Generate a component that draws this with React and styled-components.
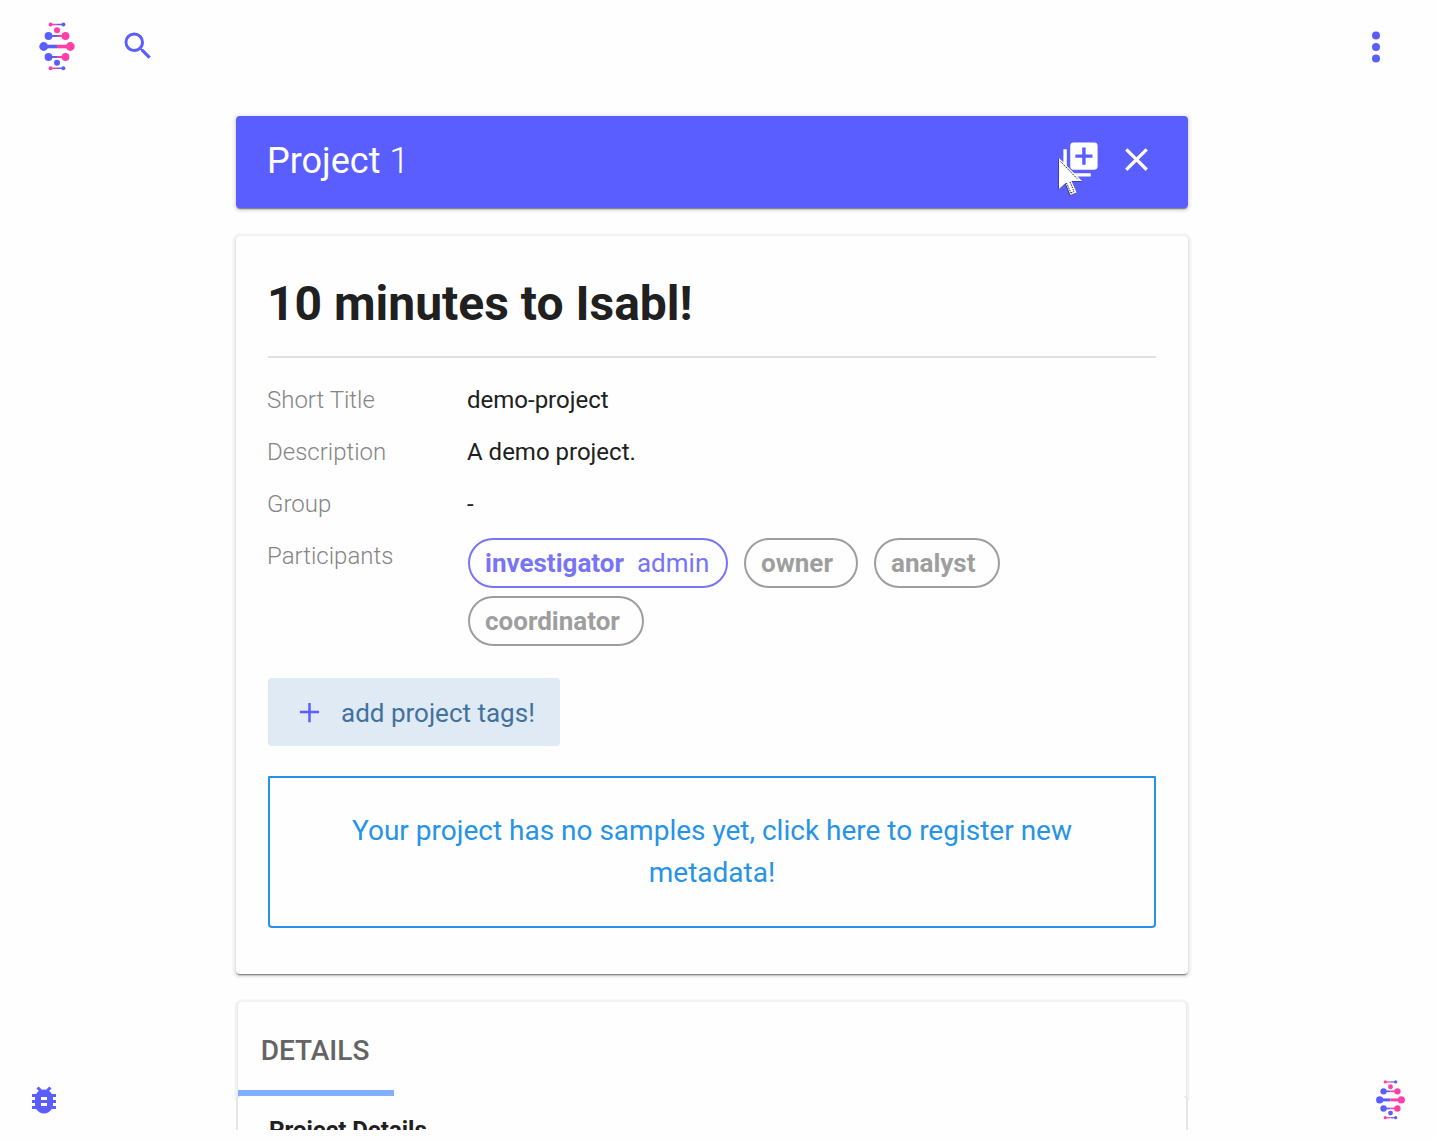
import React from "react";
import styled, { createGlobalStyle } from "styled-components";

const GlobalStyle = createGlobalStyle`
  *, *::before, *::after { box-sizing: border-box; }
  body { margin: 0; background: #fefefe; font-family: Roboto, "Liberation Sans", sans-serif; color: #202020; }
  h1, h2, p, dl, dd, dt { margin: 0; }
  button { font: inherit; border: 0; padding: 0; background: none; cursor: pointer; }
`;

const Page = styled.div`
  position: relative;
  width: 1436px;
  height: 1130px;
  overflow: hidden;
`;
const TopBar = styled.header`
  display: flex;
  align-items: center;
  height: 92px;
  padding: 0 40px 0 38px;
`;
const IconButton = styled.button`
  display: flex;
  color: ${(p) => p.$color || "#5b5eff"};
`;
const SearchButton = styled(IconButton)`
  margin-left: 44px;
`;
const MenuButton = styled(IconButton)`
  margin-left: auto;
`;
const Main = styled.main`
  display: flex;
  flex-direction: column;
  width: 952px;
  margin: 24px 0 0 236px;
`;
const Card = styled.section`
  border-radius: 4px;
  background: #fefefe;
  box-shadow: 0 2px 2px -1px rgba(0, 0, 0, 0.5), 0 1px 2px rgba(0, 0, 0, 0.16), 0 1px 0 3.5px #f3f3f3;
`;
const TitleBar = styled(Card)`
  display: flex;
  align-items: center;
  height: 92px;
  padding: 0 32px 0 31px;
  background: #5b5eff;
  color: #fff;
`;
const BarTitle = styled.h2`
  flex: 1;
  font-size: 36px;
  line-height: 44px;
  font-weight: 400;
  padding-bottom: 3px;
`;
const Thin = styled.span`
  font-weight: 300;
`;
const BarActions = styled.div`
  display: flex;
  align-items: center;
  gap: 16px;
  padding-bottom: 5px;
`;
const Summary = styled(Card)`
  margin-top: 28px;
  height: 738px;
  padding: 32px;
`;
const Heading = styled.h1`
  height: 90px;
  border-bottom: 2px solid #e0e0e0;
  font-size: 48px;
  line-height: 72px;
  font-weight: 700;
  text-indent: -1px;
`;
const Fields = styled.dl`
  display: grid;
  grid-template-columns: 200px 1fr;
  grid-auto-rows: minmax(52px, auto);
  margin-top: 16px;
  font-size: 24px;
  line-height: 52px;
`;
const Label = styled.dt`
  color: #858585;
  font-weight: 300;
  text-indent: -1px;
`;
const Value = styled.dd`
  color: #202020;
  text-indent: -1px;
`;
const Chips = styled.dd`
  display: flex;
  flex-wrap: wrap;
  gap: 8px 16px;
  width: 560px;
  padding-top: 8px;
`;
const Chip = styled.span`
  display: flex;
  gap: 13px;
  width: ${(p) => p.$width}px;
  height: 50px;
  padding-left: 15px;
  border: 2px solid currentColor;
  border-radius: 25px;
  color: ${(p) => (p.$active ? "#7774f8" : "#9e9e9e")};
  font-size: 26px;
  line-height: 47px;
  white-space: nowrap;
`;
const TagButton = styled.button`
  display: flex;
  align-items: center;
  width: 292px;
  height: 68px;
  margin-top: 32px;
  padding: 0 0 0 25px;
  border-radius: 4px;
  background: #e0eaf5;
  color: #42729c;
  font-size: 26px;
  white-space: nowrap;
  svg { margin-right: 15px; color: #5b5eff; flex: none; }
`;
const TagText = styled.span`
  padding-top: 2px;
`;
const Notice = styled.button`
  display: block;
  width: 888px;
  height: 152px;
  margin-top: 30px;
  padding: 0 60px;
  border: 2px solid #2693e8;
  border-radius: 1px 1px 4px 4px;
  color: #2693e8;
  font-size: 28px;
  line-height: 42px;
  text-align: center;
`;
const Details = styled.section`
  width: 948px;
  margin: 28px 2px 0;
`;
const Tabs = styled.nav`
  height: 94px;
  border-radius: 4px 4px 0 0;
  background: #fefefe;
  box-shadow: 0 1px 2px rgba(0, 0, 0, 0.16), 0 1px 0 3.5px #f3f3f3;
`;
const Tab = styled.button`
  display: block;
  width: 156px;
  height: 94px;
  padding: 9px 2px 0 0;
  border-bottom: 6px solid #80b0ff;
  color: #646464;
  font-size: 28px;
  line-height: 79px;
  font-weight: 500;
  text-align: center;
`;
const DetailsBody = styled.div`
  position: relative;
  height: 60px;
  padding: 16px 31px;
  border-radius: 4px 4px 0 0;
  background: #fefefe;
  box-shadow: 0 0 0 2px #e5e5e5;
  clip-path: inset(0 -2px);
  font-size: 24px;
  line-height: 36px;
  font-weight: 700;
`;
const Corner = styled.div`
  position: absolute;
  z-index: 2;
  left: ${(p) => p.$left}px;
  top: ${(p) => p.$top}px;
  line-height: 0;
`;

const BLUE = "#5b5eff";
const PINK = "#ff3fa8";
const RUNGS = [
  { y: 3.5, half: 6.4, r: 2, w: 1.5, left: PINK, right: BLUE },
  { y: 15, half: 8.5, r: 3.9, w: 2, left: BLUE, right: PINK },
  { y: 25.5, half: 13.3, r: 4.4, w: 3.6, left: BLUE, right: PINK },
  { y: 36, half: 8.5, r: 3.9, w: 2, left: BLUE, right: PINK },
  { y: 47.3, half: 6.4, r: 2, w: 1.5, left: PINK, right: BLUE },
];

function Helix({ width = 38, height = 50 }) {
  return (
    <svg width={width} height={height} viewBox="0 0 38 50" aria-label="Isabl">
      {RUNGS.map((g) => (
        <g key={g.y}>
          <path d={`M${19 - g.half} ${g.y}H19`} stroke={g.left} strokeWidth={g.w} />
          <path d={`M19 ${g.y}h${g.half}`} stroke={g.right} strokeWidth={g.w} />
          <circle cx={19 - g.half} cy={g.y} r={g.r} fill={g.left} />
          <circle cx={19 + g.half} cy={g.y} r={g.r} fill={g.right} />
        </g>
      ))}
      <circle cx="19" cy="9.3" r="3" fill={PINK} />
      <circle cx="19" cy="41.7" r="3" fill={BLUE} />
    </svg>
  );
}

function Icon({ size, d }) {
  return (
    <svg width={size} height={size} viewBox="0 0 24 24" fill="currentColor">
      <path d={d} />
    </svg>
  );
}

const ICONS = {
  search: "M9.5 3A6.5 6.5 0 0 1 16 9.5c0 1.61-.59 3.09-1.56 4.23l.27.27h.79l5 5-1.5 1.5-5-5v-.79l-.27-.27A6.516 6.516 0 0 1 9.5 16a6.5 6.5 0 0 1 0-13m0 2C7 5 5 7 5 9.5S7 14 9.5 14 14 12 14 9.5 12 5 9.5 5Z",
  addSet: "M19 11h-4v4h-2v-4H9V9h4V5h2v4h4m1-7H8a2 2 0 0 0-2 2v12a2 2 0 0 0 2 2h12a2 2 0 0 0 2-2V4a2 2 0 0 0-2-2M4 6H2v14a2 2 0 0 0 2 2h14v-2H4V6Z",
  close: "M19 6.41 17.59 5 12 10.59 6.41 5 5 6.41 10.59 12 5 17.59 6.41 19 12 13.41 17.59 19 19 17.59 13.41 12 19 6.41Z",
  plus: "M19 12.6h-6.1V19h-1.8v-6.4H5v-1.8h6.1V5h1.8v5.8H19v1.8Z",
  bug: "M14 12h-4v-2h4m0 6h-4v-2h4m6-6h-2.81a5.985 5.985 0 0 0-1.82-1.96L17 4.41 15.59 3l-2.17 2.17a6.002 6.002 0 0 0-2.83 0L8.41 3 7 4.41l1.62 1.63C7.88 6.55 7.26 7.22 6.81 8H4v2h2.09c-.05.33-.09.66-.09 1v1H4v2h2v1c0 .34.04.67.09 1H4v2h2.81c1.04 1.79 2.97 3 5.19 3s4.15-1.21 5.19-3H20v-2h-2.09c.05-.33.09-.66.09-1v-1h2v-2h-2v-1c0-.34-.04-.67-.09-1H20V8Z",
};

const PARTICIPANTS = [
  { role: "investigator", user: "admin", width: 260 },
  { role: "owner", width: 114 },
  { role: "analyst", width: 126 },
  { role: "coordinator", width: 176 },
];

export default function App() {
  return (
    <Page>
      <GlobalStyle />
      <TopBar>
        <Helix />
        <SearchButton aria-label="Search"><Icon size={36} d={ICONS.search} /></SearchButton>
        <MenuButton aria-label="Menu">
          <svg width="40" height="40" viewBox="0 0 40 40" fill="currentColor">
            <circle cx="20" cy="9.5" r="4" />
            <circle cx="20" cy="21" r="4" />
            <circle cx="20" cy="32.5" r="4" />
          </svg>
        </MenuButton>
      </TopBar>
      <Main>
        <TitleBar>
          <BarTitle>Project <Thin>1</Thin></BarTitle>
          <BarActions>
            <IconButton $color="#fff" aria-label="Add samples"><Icon size={41} d={ICONS.addSet} /></IconButton>
            <IconButton $color="#fff" aria-label="Close"><Icon size={39} d={ICONS.close} /></IconButton>
          </BarActions>
        </TitleBar>
        <Summary>
          <Heading>10 minutes to Isabl!</Heading>
          <Fields>
            <Label>Short Title</Label><Value>demo-project</Value>
            <Label>Description</Label><Value>A demo project.</Value>
            <Label>Group</Label><Value>-</Value>
            <Label>Participants</Label>
            <Chips>
              {PARTICIPANTS.map((p) => (
                <Chip key={p.role} $active={Boolean(p.user)} $width={p.width}>
                  <b>{p.role}</b>
                  {p.user && <span>{p.user}</span>}
                </Chip>
              ))}
            </Chips>
          </Fields>
          <TagButton>
            <Icon size={33} d={ICONS.plus} />
            <TagText>add project tags!</TagText>
          </TagButton>
          <Notice>Your project has no samples yet, click here to register new metadata!</Notice>
        </Summary>
        <Details>
          <Tabs><Tab>DETAILS</Tab></Tabs>
          <DetailsBody>Project Details</DetailsBody>
        </Details>
      </Main>
      <Corner $left={26} $top={1082}>
        <IconButton aria-label="Report a bug"><Icon size={36} d={ICONS.bug} /></IconButton>
      </Corner>
      <Corner $left={1374.5} $top={1079}><Helix width={31} height={41} /></Corner>
      <Corner $left={1056} $top={157}>
        <svg width="28" height="42" viewBox="0 0 28 42">
          <path d="M3 1v31l6.5-6 5 12 6-2.5-5-11.5H26Z" fill="rgba(0,0,0,.45)" transform="translate(-.7 .8)" />
          <path d="M3 1v31l6.5-6 5 12 6-2.5-5-11.5H26Z" fill="#fff" />
          <path d="M4.5 4.5 22 22.5M10.5 26l4.5 10M14 25l4 9.5M15 36l3-1.5" fill="none" stroke="#222" strokeWidth="1" strokeDasharray="1.5 1" />
        </svg>
      </Corner>
    </Page>
  );
}
